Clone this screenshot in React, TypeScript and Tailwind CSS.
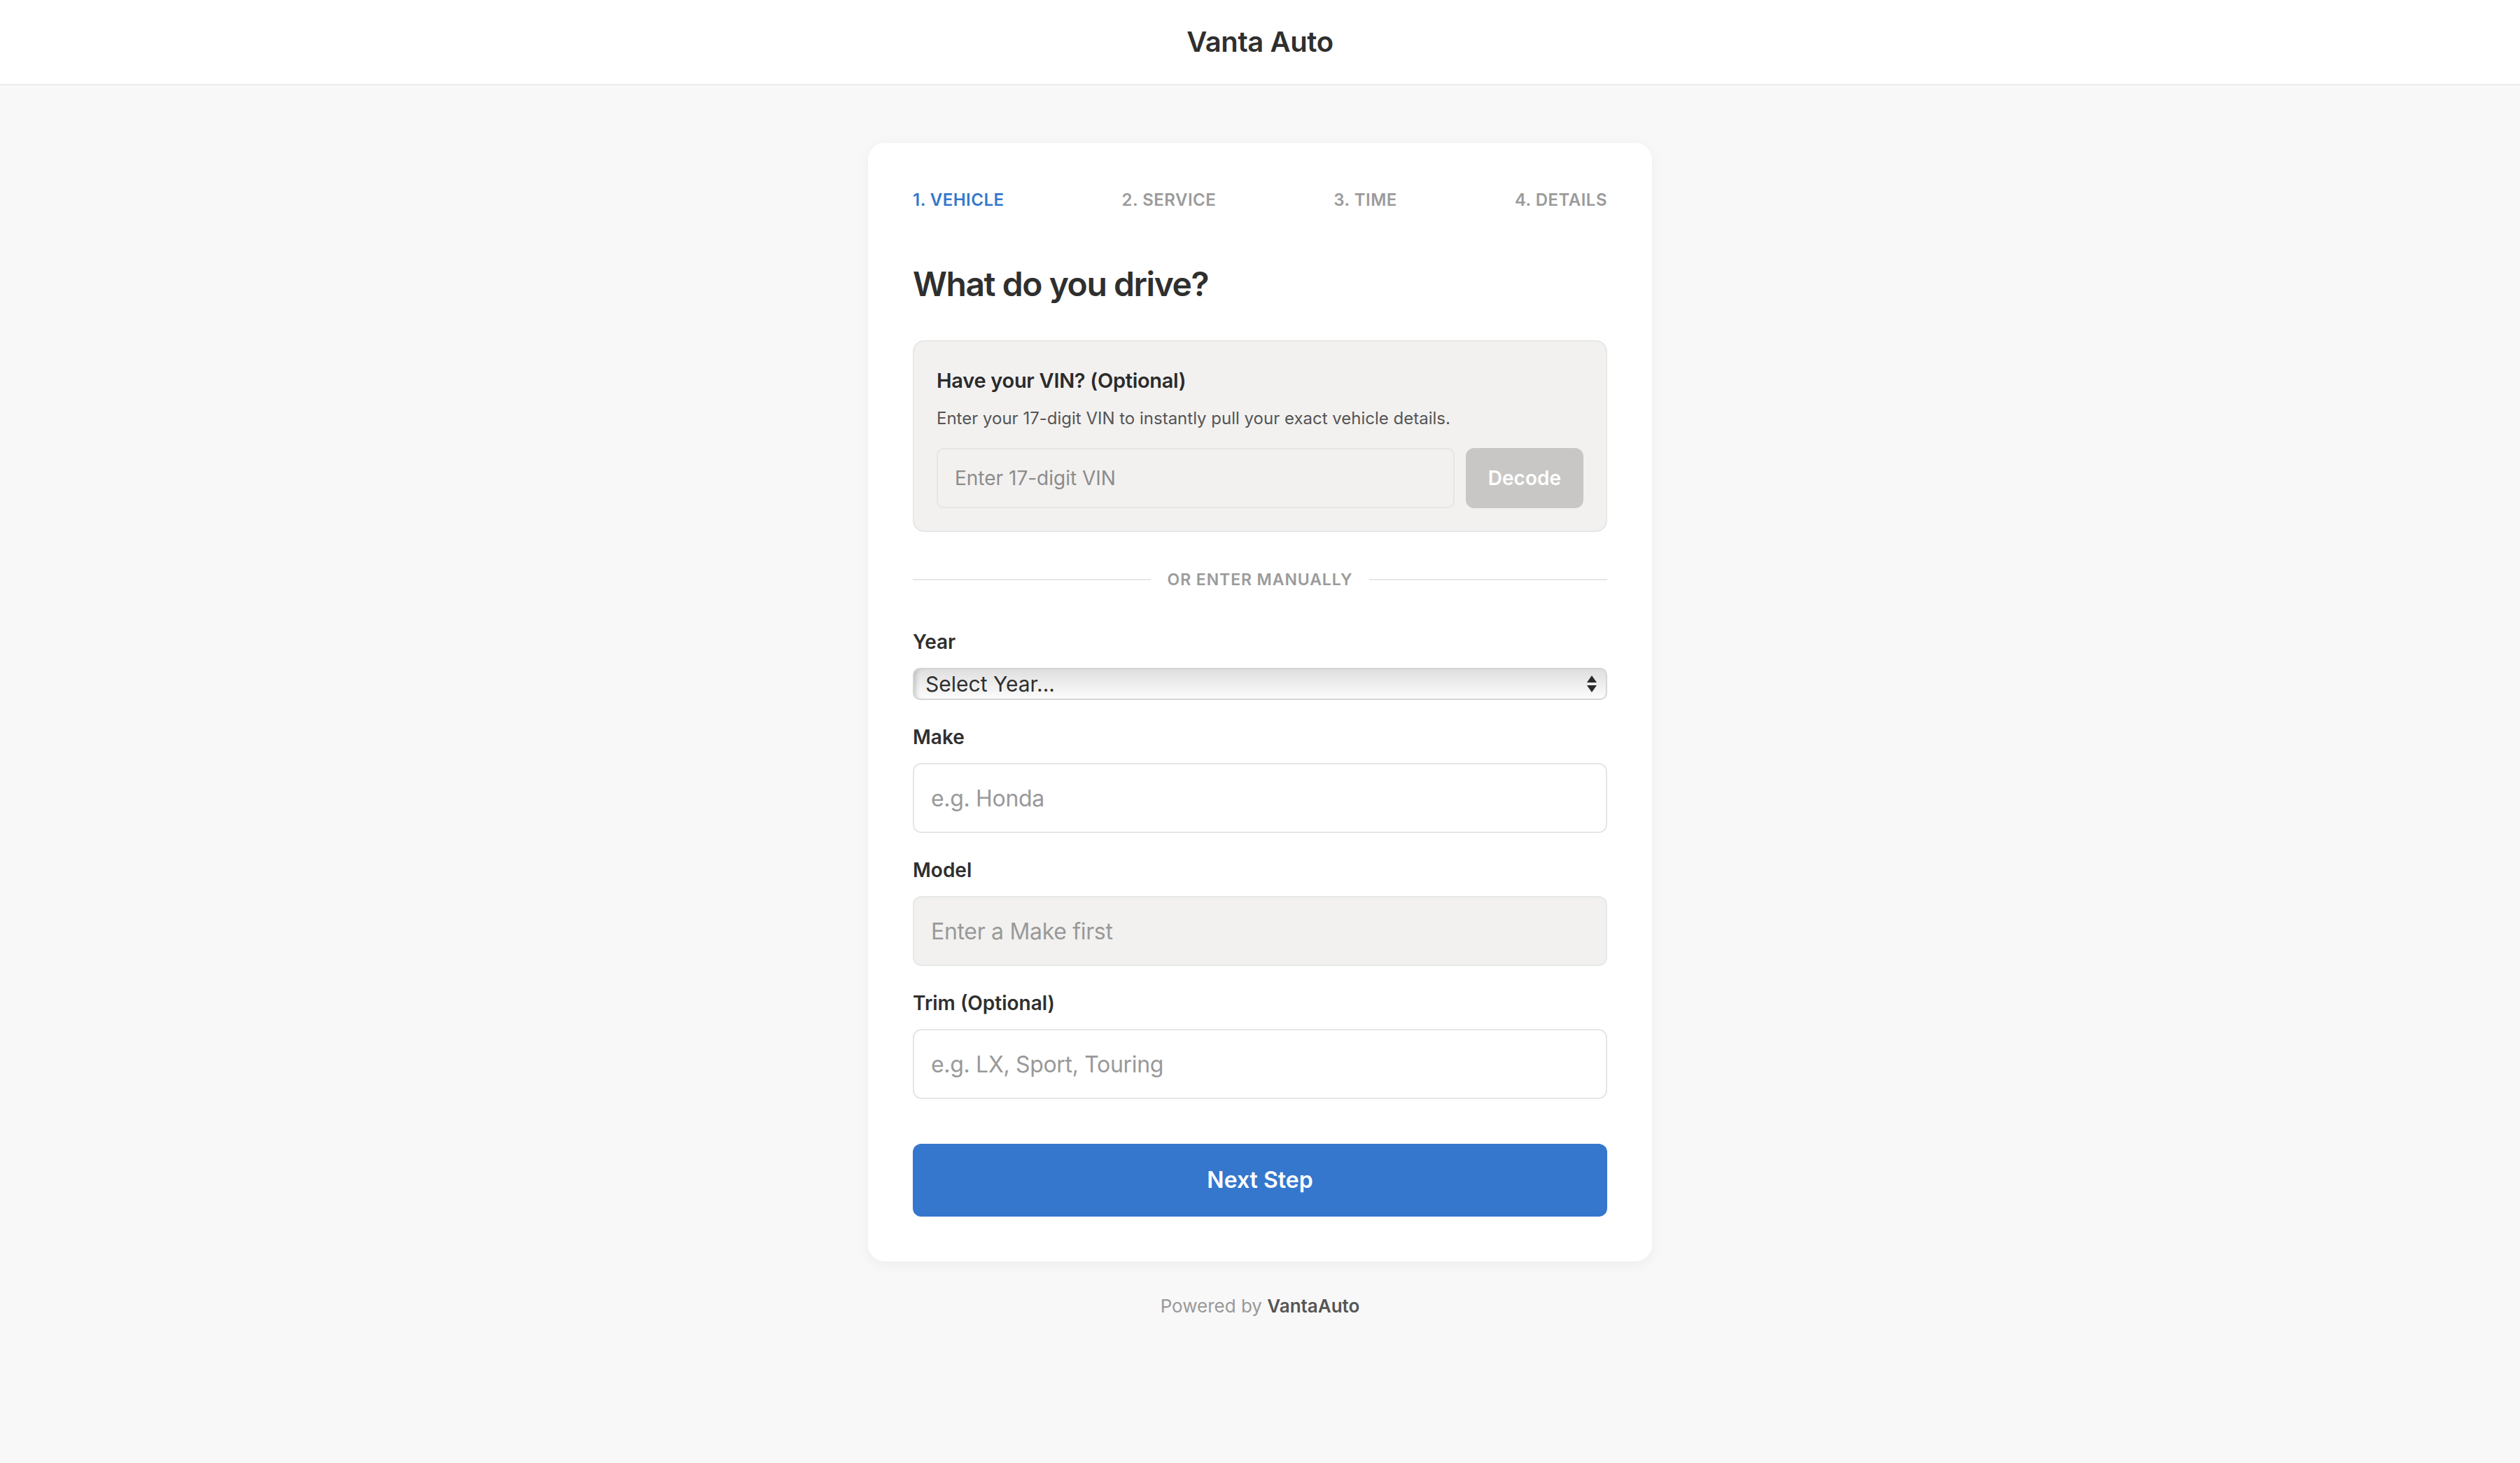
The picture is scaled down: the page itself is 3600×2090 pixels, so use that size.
import React from "react";

function Field({ label, children }: { label: string; children: React.ReactNode }) {
  return (
    <div className="flex flex-col">
      <label className="mb-2 block text-sm font-semibold leading-[21px] text-[#2f2f2f]">{label}</label>
      {children}
    </div>
  );
}

export default function App() {
  const steps = ["1. Vehicle", "2. Service", "3. Time", "4. Details"];
  return (
    <div className="min-h-screen bg-[#f8f8f8] font-[Inter,'Liberation_Sans',sans-serif] text-[#2f2f2f]">
      <div className="[zoom:2]">
        <header className="flex h-[61px] items-center justify-center border-b border-[#ebebeb] bg-white">
          <h1 className="text-[20px] font-semibold tracking-[-0.01em] text-[#2f2f2f]">Vanta Auto</h1>
        </header>

        <main className="flex flex-col items-center pt-[41px]">
          <div className="w-[560px] rounded-xl bg-white px-8 pb-8 pt-[33px] shadow-[0_2px_10px_rgba(0,0,0,0.05)]">
            <nav className="mb-9 flex justify-between text-xs font-semibold uppercase leading-4 tracking-[0.02em]">
              {steps.map((s, i) => (
                <span key={s} className={i === 0 ? "text-[#3477cc]" : "text-[#9b9b9b]"}>
                  {s}
                </span>
              ))}
            </nav>

            <h2 className="mb-6 text-2xl font-semibold leading-8 tracking-[-0.03em] text-[#2f2f2f]">What do you drive?</h2>

            <section className="rounded-lg border border-[#e8e7e5] bg-[#f2f1f0] px-4 pb-4 pt-[17px]">
              <h3 className="text-[14.5px] font-semibold leading-[22px] tracking-[-0.01em] text-[#2b2b2b]">
                Have your VIN? (Optional)
              </h3>
              <p className="mt-[7px] text-xs leading-[18px] text-[#555]">
                Enter your 17-digit VIN to instantly pull your exact vehicle details.
              </p>
              <div className="mt-3 flex gap-2">
                <input
                  type="text"
                  placeholder="Enter 17-digit VIN"
                  className="h-[43px] flex-1 rounded-[5px] border border-[#e6e5e3] bg-[#f2f1f0] px-3 text-sm text-[#333] outline-none placeholder:text-[#8c8c8c]"
                />
                <button className="h-[43px] rounded-md bg-[#c8c7c5] px-4 text-sm font-semibold text-white">Decode</button>
              </div>
            </section>

            <div className="my-6 flex h-5 items-center gap-3">
              <div className="h-px flex-1 bg-[#e6e6e6]" />
              <span className="text-[11.5px] font-semibold uppercase tracking-[0.04em] text-[#9b9b9b]">Or enter manually</span>
              <div className="h-px flex-1 bg-[#e6e6e6]" />
            </div>

            <div className="flex flex-col gap-4">
              <Field label="Year">
                <div className="relative">
                  <select className="block h-[23px] w-full appearance-none rounded-[5px] border border-[#d6d6d6] bg-gradient-to-b from-[#dfdfdf] to-[#fcfcfc] pl-2 pr-6 text-[15px] leading-5 text-[#2f2f2f] shadow-[inset_3px_0_3px_-2px_rgba(0,0,0,0.2)] outline-none">
                    <option>Select Year...</option>
                  </select>
                  <svg
                    className="pointer-events-none absolute right-[7px] top-1/2 -translate-y-1/2"
                    width="8"
                    height="13"
                    viewBox="0 0 8 13"
                  >
                    <path d="M4 0.5 L7.5 5.5 L0.5 5.5 Z" fill="#2a2a2a" />
                    <path d="M0.5 7.5 L7.5 7.5 L4 12.5 Z" fill="#2a2a2a" />
                  </svg>
                </div>
              </Field>

              <Field label="Make">
                <input
                  type="text"
                  placeholder="e.g. Honda"
                  className="h-[50px] w-full rounded-md border border-[#e6e6e6] bg-white px-3 text-base tracking-[-0.01em] text-[#333] outline-none placeholder:text-[#999]"
                />
              </Field>

              <Field label="Model">
                <input
                  type="text"
                  disabled
                  placeholder="Enter a Make first"
                  className="h-[50px] w-full rounded-md border border-[#e8e8e8] bg-[#f2f1f0] px-3 text-base tracking-[-0.01em] text-[#333] outline-none placeholder:text-[#999]"
                />
              </Field>

              <Field label="Trim (Optional)">
                <input
                  type="text"
                  placeholder="e.g. LX, Sport, Touring"
                  className="h-[50px] w-full rounded-md border border-[#e6e6e6] bg-white px-3 text-base tracking-[-0.01em] text-[#333] outline-none placeholder:text-[#999]"
                />
              </Field>
            </div>

            <button className="mt-8 h-[52px] w-full rounded-md bg-[#3477cd] text-base font-semibold text-white">Next Step</button>
          </div>

          <p className="mt-6 text-[13px] leading-4 text-[#999]">
            Powered by <span className="font-semibold text-[#555]">VantaAuto</span>
          </p>
        </main>
      </div>
    </div>
  );
}
